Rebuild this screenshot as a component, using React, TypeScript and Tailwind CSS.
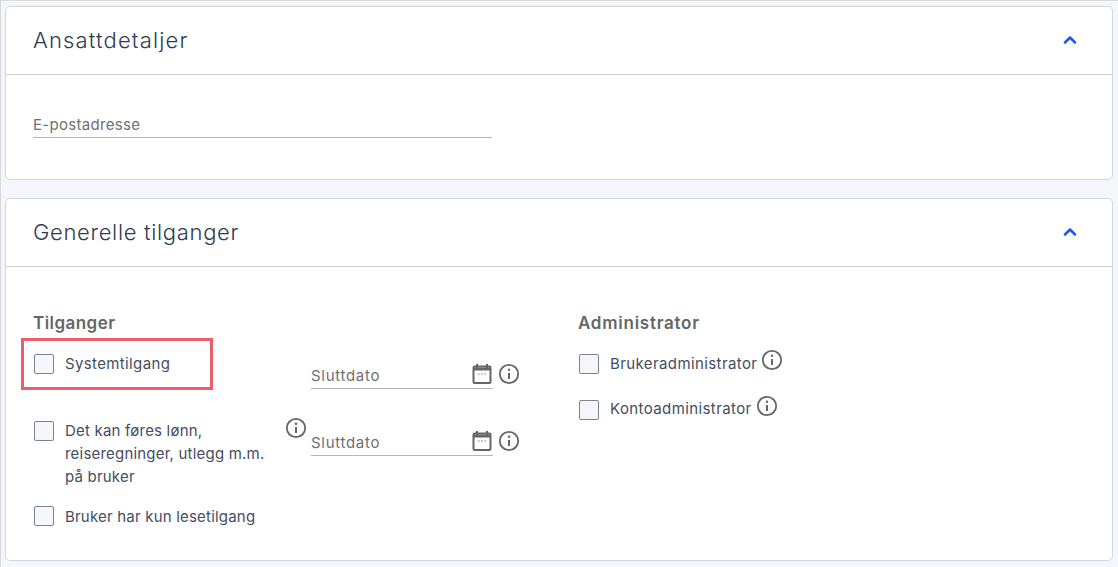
import { ChevronUp } from 'lucide-react'

function InfoIcon() {
    return (
        <svg width="22" height="22" viewBox="0 0 22 22" fill="none" stroke="#666" className="shrink-0">
            <circle cx="11" cy="11" r="9.2" strokeWidth="1.8" />
            <circle cx="11" cy="6.8" r="1.2" fill="#666" stroke="none" />
            <path d="M11 10v6" strokeWidth="2" />
        </svg>
    )
}

function CalendarIcon() {
    return (
        <svg width="20" height="22" viewBox="0 0 20 22" fill="none" className="shrink-0">
            <path d="M5 1v4M15 1v4" stroke="#666" strokeWidth="2" />
            <rect x="1.5" y="3.5" width="17" height="16.5" rx="1" stroke="#666" strokeWidth="2" />
            <path d="M1.5 4.5h17v3h-17z" fill="#666" />
            <path d="M6 11h1.6M9.2 11h1.6M12.4 11H14" stroke="#888" strokeWidth="1.2" />
        </svg>
    )
}

function Checkbox() {
    return <div className="ml-[1px] h-5 w-5 shrink-0 rounded-[2px] border border-[#7c8290] bg-[#f5f6fb]" />
}

function DateField() {
    return (
        <div className="flex items-start gap-[5px]">
            <div className="flex h-[40px] w-[182px] items-end justify-between border-b border-[#b5b5b5] pb-[2px] pr-[1px]">
                <span className="text-[15px] leading-5 tracking-[0.7px] text-[#6f6f6f]">Sluttdato</span>
                <span className="mb-[1px]"><CalendarIcon /></span>
            </div>
            <div className="pt-[14px]"><InfoIcon /></div>
        </div>
    )
}

function Card({ title, titleClass, className, children }: { title: string; titleClass: string; className: string; children: React.ReactNode }) {
    return (
        <section className={`rounded-[5px] border border-[#d5d6dc] bg-white ${className}`}>
            <header className="flex h-[68px] items-center justify-between border-b border-[#d0d0d4] pl-[27px] pr-[32px]">
                <h2 className={`text-[22px] font-light text-[#2f3b52] ${titleClass}`}>{title}</h2>
                <ChevronUp size={20} strokeWidth={3} className="mb-[2px] text-[#1f55ff]" />
            </header>
            {children}
        </section>
    )
}

export default function App() {
    return (
        <div className="h-[567px] w-[1118px] overflow-hidden border-l border-t border-[#d9d9d9] bg-[#f5f6fb] pl-[4px] pr-[5px] pt-[5px] font-['Inter','Noto_Sans',sans-serif]">
            <Card title="Ansattdetaljer" titleClass="tracking-[1.15px]" className="mb-[18px] h-[174px]">
                <div className="pl-[27px] pt-[39px]">
                    <div className="flex h-[24px] w-[459px] items-end border-b border-[#b5b5b5] pb-[2px] text-[15px] leading-5 tracking-[0.3px] text-[#6f6f6f]">E-postadresse</div>
                </div>
            </Card>
            <Card title="Generelle tilganger" titleClass="tracking-[0.67px]" className="h-[363px]">
                <div className="flex pl-[27px] pt-[46px]">
                    <div className="w-[278px]">
                        <h3 className="text-[17px] font-semibold leading-5 tracking-[0.45px] text-[#666]">Tilganger</h3>
                        <div className="relative mt-[21px] flex h-5 items-center gap-[11px]">
                            <Checkbox />
                            <span className="mt-[1px] text-[15px] tracking-[0.37px] text-[#444d62]">Systemtilgang</span>
                            <div className="absolute -left-[12px] -top-[16px] h-[52px] w-[192px] border-[3px] border-[#ec5c6c]" />
                        </div>
                        <div className="mt-[47px] flex items-start gap-[11px]">
                            <Checkbox />
                            <p className="-mt-[2px] w-[209px] text-[15px] leading-[23px] tracking-[0.2px] text-[#444d62]">Det kan føres lønn, reiseregninger, utlegg m.m. på bruker</p>
                            <span className="-mt-[4px]"><InfoIcon /></span>
                        </div>
                        <div className="mt-[18px] flex h-5 items-center gap-[11px]">
                            <Checkbox />
                            <span className="mt-[2px] text-[15px] tracking-[0.2px] text-[#444d62]">Bruker har kun lesetilgang</span>
                        </div>
                    </div>
                    <div className="w-[267px] pt-[36px]">
                        <DateField />
                        <div className="mt-[27px]"><DateField /></div>
                    </div>
                    <div>
                        <h3 className="text-[17px] font-semibold leading-5 tracking-[0.75px] text-[#666]">Administrator</h3>
                        <div className="mt-[21px] flex items-start gap-[11px]">
                            <Checkbox />
                            <span className="text-[15px] leading-5 tracking-[0.4px] text-[#444d62]">Brukeradministrator</span>
                            <span className="-ml-[7px] -mt-[5px]"><InfoIcon /></span>
                        </div>
                        <div className="mt-[26px] flex items-start gap-[11px]">
                            <Checkbox />
                            <span className="-mt-[1px] text-[15px] leading-5 tracking-[0.4px] text-[#444d62]">Kontoadministrator</span>
                            <span className="-ml-[7px] -mt-[5px]"><InfoIcon /></span>
                        </div>
                    </div>
                </div>
            </Card>
        </div>
    )
}
